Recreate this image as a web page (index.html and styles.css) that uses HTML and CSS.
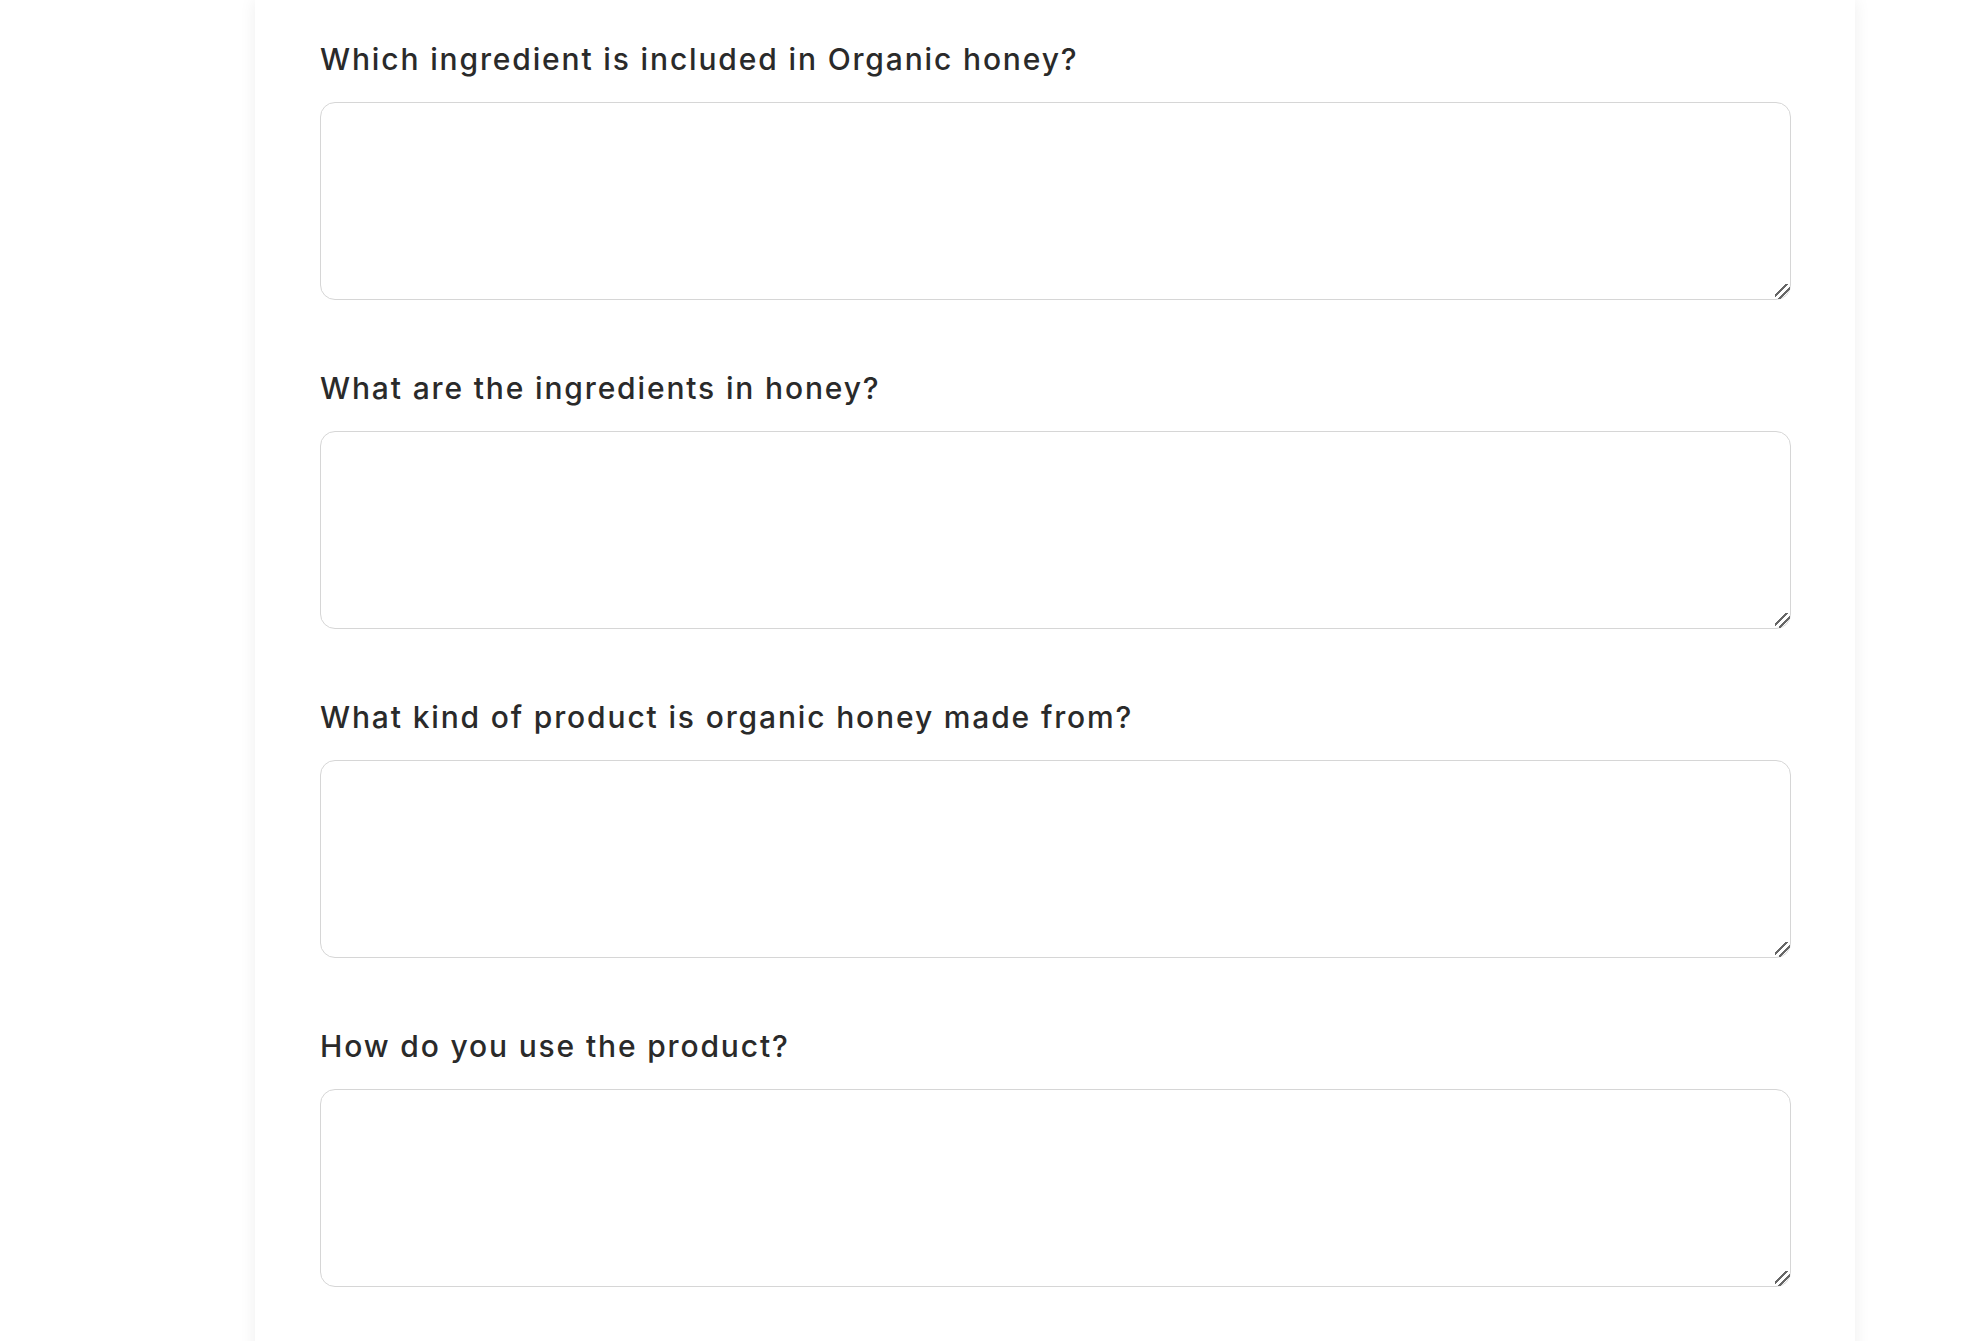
FILE: index.html
```html
<!DOCTYPE html>
<html lang="en">
<head>
<meta charset="utf-8">
<title>Product questions</title>
<link rel="stylesheet" href="styles.css">
</head>
<body>
<div class="page">
  <form class="card">
    <div class="field">
      <label class="label" for="q1">Which ingredient is included in Organic honey?</label>
      <textarea class="answer" id="q1"></textarea>
    </div>
    <div class="field">
      <label class="label" for="q2">What are the ingredients in honey?</label>
      <textarea class="answer" id="q2"></textarea>
    </div>
    <div class="field">
      <label class="label" for="q3">What kind of product is organic honey made from?</label>
      <textarea class="answer" id="q3"></textarea>
    </div>
    <div class="field">
      <label class="label" for="q4">How do you use the product?</label>
      <textarea class="answer" id="q4"></textarea>
    </div>
  </form>
</div>
</body>
</html>
```

FILE: styles.css
```css
html, body {
  margin: 0;
  padding: 0;
  background: #ffffff;
}
body {
  font-family: Inter, "Open Sans", "Liberation Sans", sans-serif;
  overflow: hidden;
}
.page {
  padding-left: 255px;
}
.card {
  width: 1600px;
  box-sizing: border-box;
  background: #ffffff;
  box-shadow: 0 0 16px rgba(0, 0, 0, 0.07);
  padding: 39px 64px 60px 65px;
  min-height: 1400px;
}
.field {
  display: flex;
  flex-direction: column;
  margin-bottom: 68px;
}
.label {
  display: block;
  font-size: 30px;
  line-height: 40px;
  font-weight: 500;
  letter-spacing: 1.85px;
  color: #2a2a2a;
  margin-bottom: 23px;
}
.answer {
  display: block;
  width: 100%;
  height: 198px;
  box-sizing: border-box;
  border: 1px solid #d6d6d6;
  border-radius: 15px;
  background: #ffffff;
  padding: 12px 16px;
  font-family: inherit;
  font-size: 18px;
  outline: none;
  resize: vertical;
}
.answer::-webkit-resizer {
  width: 16px;
  height: 16px;
  background:
    linear-gradient(135deg,
      transparent 0 36%,
      #666666 36% 44%,
      transparent 44% 60%,
      #666666 60% 68%,
      transparent 68% 100%);
}
```
